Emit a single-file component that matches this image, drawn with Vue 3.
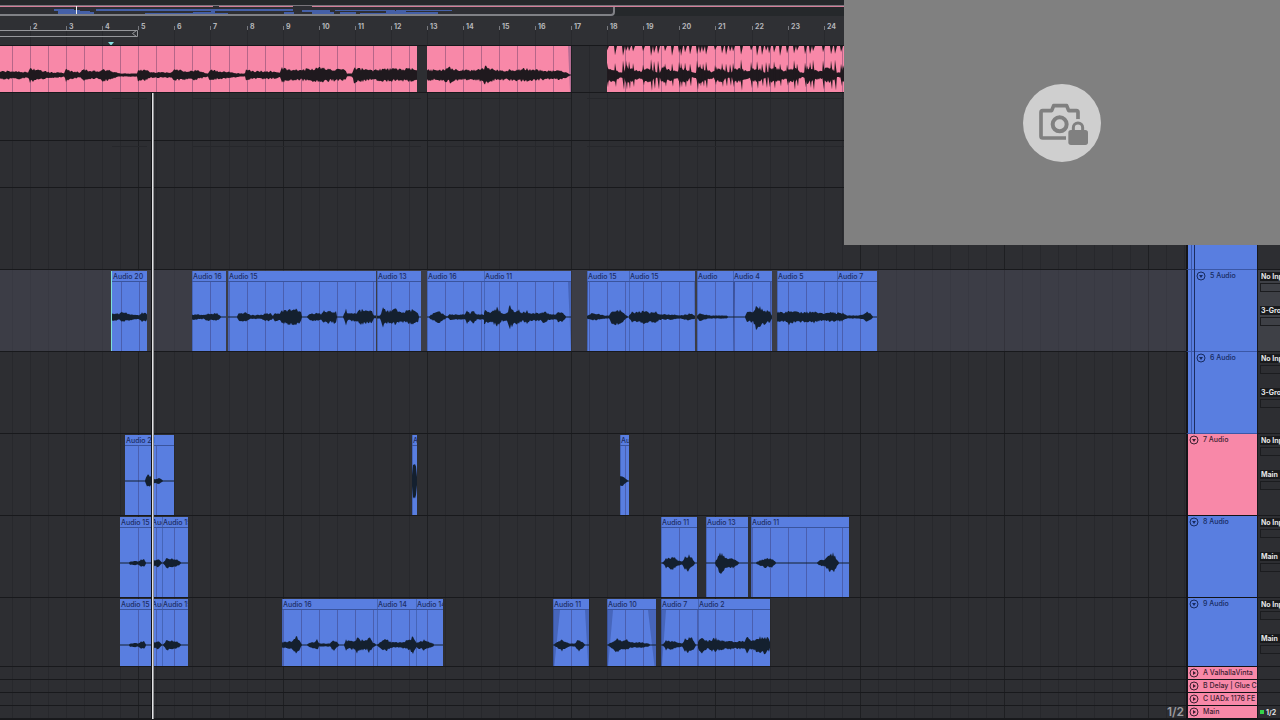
<script setup>
const BAR = 36.07
const ORIGIN = -42

const barX = (n) => Math.round(ORIGIN + n * BAR)
const bars = Array.from({ length: 24 }, (_, i) => ({ n: i + 1, x: barX(i + 1) }))
const gridLines = Array.from({ length: 140 }, (_, i) => ({
  x: Math.round(ORIGIN + BAR + (i * BAR) / 2),
  major: (i / 2) % 4 === 0,
}))

const noise = (n) => {
  const v = Math.sin(n * 12.9898 + 4.1) * 43758.5453
  return v - Math.floor(v)
}

function level(env, x) {
  if (x <= env[0]) return env[1]
  for (let i = 2; i < env.length; i += 2) {
    if (x <= env[i]) {
      const t = (x - env[i - 2]) / (env[i] - env[i - 2] || 1)
      return env[i - 1] + (env[i + 1] - env[i - 1]) * t
    }
  }
  return env[env.length - 1]
}

function wavePath(clip, mid) {
  const top = []
  const bottom = []
  for (let x = clip.x; x <= clip.x + clip.w; x += 1) {
    const a = level(clip.env, x)
    const up = a < 0.6 ? 0.5 : a * (0.75 + noise(x) * 0.6) + 0.4
    const down = a < 0.6 ? 0.5 : a * (0.75 + noise(x + 777) * 0.6) + 0.4
    top.push(`${x - clip.x} ${(mid - up).toFixed(1)}`)
    bottom.unshift(`${x - clip.x} ${(mid + down).toFixed(1)}`)
  }
  return `M${top.join('L')}L${bottom.join('L')}Z`
}

const drumHits = [
  607, 615, 623, 626, 629, 633, 643, 651, 654, 658, 665, 672, 679, 681, 685, 690, 697, 700, 703, 706,
  715, 722, 726, 730, 733, 741, 751, 757, 762, 766, 769, 774, 780, 787, 794, 797, 805, 810, 813, 823, 831, 835, 841,
]

function drumPeaks(clip) {
  return drumHits
    .map((h, i) => {
      const x = h - clip.x
      const s = 10 + noise(i) * 6
      const t = 4 + noise(i + 50) * 6
      return (
        `M${x - 1} 29L${x} ${(29 - s).toFixed(1)}L${x + 2} 29L${x + 1} ${(29 + s).toFixed(1)}Z` +
        `M${x - 1} 0L${x} ${t.toFixed(1)}L${x + 1} ${(t / 2).toFixed(1)}L${x + 2} 0Z`
      )
    })
    .join('')
}

const linesIn = (clip) => gridLines.filter((g) => g.x > clip.x && g.x < clip.x + clip.w).map((g) => g.x - clip.x)

const c = (name, x, end, env, extra = {}) => ({ name, x, w: end - x, env, ...extra })

const drumEnv = [607, 6]
for (let n = 18; n < 25; n++) {
  const x = barX(n)
  drumEnv.push(x + 1, 6, x + 8, 5, x + 13, 2, x + 17, 2, x + 19, 7, x + 26, 5, x + 32, 3, x + 35, 3)
}

const vocalDouble = () => [
  c('Audio 15', 120, 151, [120, 0, 128, 0, 130, 1, 136, 1.5, 138, 1, 141, 3, 144, 3, 146, 0, 151, 0]),
  c('Audio 15', 151, 162, [151, 5, 153, 5, 154, 2, 157, 3, 160, 2, 162, 0]),
  c('Audio 15', 162, 188, [162, 0, 164, 1, 166, 4, 169, 4, 173, 3, 177, 3, 180, 1, 182, 0, 188, 0]),
]

const tracks = [
  {
    id: 't1', size: 'mix', clips: [
      c('', -2, 417, [0, 3, 20, 3, 28, 2, 30, 6, 38, 4, 45, 3, 50, 2, 60, 2, 64, 1, 66, 5, 72, 3, 80, 2, 84, 5, 90, 3, 100, 3, 103, 5, 112, 3, 120, 1, 137, 1, 138, 5, 146, 4, 151, 2, 164, 2, 172, 2, 174, 5, 182, 4, 190, 3, 194, 4, 200, 3, 208, 1, 210, 5, 218, 3, 225, 3, 232, 2, 240, 1, 245, 1, 246, 4, 256, 3, 262, 3, 270, 3, 280, 2, 282, 6, 290, 4, 300, 4, 306, 5, 320, 6, 330, 5, 345, 4, 347, 1, 352, 1, 354, 6, 364, 5, 372, 4, 380, 5, 390, 5, 405, 5, 417, 5]),
      c('', 427, 571, [427, 4, 440, 4, 450, 6, 460, 4, 470, 4, 480, 5, 486, 7, 495, 4, 510, 4, 525, 5, 540, 4, 550, 3, 560, 4, 566, 2, 571, 0], { fadeOut: 3 }),
      c('', 607, 900, drumEnv, { drums: true }),
    ],
  },
  { id: 't2', size: 'mid', clips: [], ghosts: true },
  { id: 't3', size: 'mix', clips: [], ghosts: true },
  { id: 't4', size: 'tall', clips: [], label: '4 Audio', tone: 'blue', grouped: true, route: '3-Group' },
  {
    id: 't5', size: 'tall', label: '5 Audio', tone: 'blue', grouped: true, route: '3-Group', selected: true, clips: [
      c('Audio 20', 111, 147, [112, 3, 118, 2.5, 121, 4, 126, 3, 134, 1.5, 138, 1.5, 141, 4, 145, 3, 147, 1], { cue: true }),
      c('Audio 16', 192, 226, [193, 2, 203, 1.5, 208, 3, 212, 2.5, 217, 3, 220, 1, 221, 0, 226, 0]),
      c('Audio 15', 228, 376, [228, 0, 237, 0, 239, 3, 245, 3.5, 250, 1.5, 262, 1.5, 265, 3, 270, 3, 273, 1, 275, 3, 280, 3, 282, 5, 290, 6, 297, 6, 301, 4, 302, 0, 307, 0, 310, 3, 318, 3, 321, 2, 324, 5, 336, 5, 337, 0, 343, 0, 346, 6, 348, 3, 356, 3, 360, 6, 372, 5, 374, 1, 376, 1]),
      c('Audio 13', 377, 421, [377, 1, 380, 1, 383, 8, 386, 5, 392, 5, 395, 7, 400, 4, 408, 5, 415, 6, 418, 4, 419, 0, 421, 0]),
      c('Audio 16', 427, 484, [428, 0, 432, 2, 438, 5, 444, 2, 447, 0, 450, 2, 465, 2, 467, 5, 470, 3, 473, 6, 477, 2, 485, 2]),
      c('Audio 11', 484, 571, [485, 5, 492, 4, 497, 8, 502, 3, 507, 4, 510, 9, 515, 5, 519, 6, 522, 3, 527, 5, 530, 3, 540, 3, 545, 5, 549, 2, 556, 2, 558, 4, 563, 4, 566, 0, 571, 0], { fadeOut: 3 }),
      c('Audio 15', 587, 629, [587, 1, 592, 3, 600, 2, 605, 1, 609, 1, 612, 6, 620, 6, 626, 1, 629, 0], { fadeIn: 1 }),
      c('Audio 15', 629, 695, [629, 1, 632, 4, 640, 4, 645, 6, 650, 3, 654, 5, 660, 2, 670, 2, 680, 1, 686, 2, 690, 3, 695, 1], { fadeOut: 1 }),
      c('Audio', 697, 733, [697, 1, 700, 3, 710, 1, 726, 1, 730, 0, 734, 0]),
      c('Audio 4', 733, 772, [734, 0, 745, 0, 747, 4, 753, 4, 756, 11, 760, 8, 764, 6, 770, 4, 772, 1], { fadeIn: 2, fadeOut: 2 }),
      c('Audio 5', 777, 837, [777, 4, 785, 3, 789, 6, 796, 4, 808, 4, 815, 5, 820, 3, 828, 3, 832, 4, 837, 3]),
      c('Audio 7', 837, 877, [837, 4, 843, 3, 847, 1, 858, 1, 863, 2, 867, 4, 870, 3, 873, 0, 877, 0]),
    ],
  },
  { id: 't6', size: 'tall', label: '6 Audio', tone: 'blue', grouped: true, route: '3-Group', clips: [] },
  {
    id: 't7', size: 'tall', label: '7 Audio', tone: 'pink', route: 'Main', clips: [
      c('Audio 21', 125, 174, [125, 0, 145, 0, 146, 3, 148, 5, 152, 4, 154, 1.5, 160, 2, 163, 0, 174, 0]),
      c('Audio 1', 412, 417, [412, 4, 413, 14, 415, 18, 416, 16, 417, 4]),
      c('Audio 1', 620, 629, [620, 4, 622, 4, 625, 2, 628, 0, 629, 0]),
    ],
  },
  {
    id: 't8', size: 'tall', label: '8 Audio', tone: 'blue', route: 'Main', clips: [
      ...vocalDouble(),
      c('Audio 11', 661, 697, [661, 0, 664, 1, 666, 4, 673, 5, 678, 2, 682, 1, 685, 5, 689, 7, 692, 4, 695, 0, 697, 0]),
      c('Audio 13', 706, 748, [706, 0, 715, 0, 717, 4, 720, 9, 724, 6, 728, 3, 734, 4, 738, 1, 740, 0, 748, 0]),
      c('Audio 11', 751, 849, [751, 0, 755, 0, 760, 2, 766, 4, 769, 3, 772, 4, 776, 0, 816, 0, 820, 2, 825, 3, 829, 6, 833, 8, 837, 3, 839, 0, 849, 0]),
    ],
  },
  {
    id: 't9', size: 'short', label: '9 Audio', tone: 'blue', route: 'Main', clips: [
      ...vocalDouble(),
      c('Audio 16', 282, 377, [282, 2, 292, 3, 297, 7, 300, 3, 302, 0, 307, 0, 310, 2, 316, 3, 317, 5, 319, 1, 330, 1, 333, 5, 337, 2, 339, 0, 344, 0, 346, 4, 355, 3, 357, 7, 360, 4, 367, 4, 369, 7, 373, 2, 377, 0]),
      c('Audio 14', 377, 416, [377, 0, 381, 3, 386, 5, 391, 2, 400, 2, 405, 3, 410, 4, 413, 7, 416, 3]),
      c('Audio 14', 416, 443, [416, 2, 420, 3, 424, 4, 429, 2, 433, 1, 434, 0, 443, 0]),
      c('Audio 11', 553, 589, [553, 0, 557, 2, 562, 5, 566, 2, 570, 1, 575, 1, 579, 5, 583, 2, 585, 0, 589, 0], { fadeIn: 7, fadeOut: 4 }),
      c('Audio 10', 607, 656, [607, 0, 611, 2, 617, 6, 622, 3, 627, 4, 631, 2, 642, 2, 648, 1, 652, 0, 656, 0], { fadeIn: 6, fadeOut: 8 }),
      c('Audio 7', 661, 698, [661, 0, 664, 1, 666, 4, 673, 3, 677, 2, 682, 1, 685, 5, 691, 7, 694, 3, 696, 0, 698, 0], { fadeIn: 5 }),
      c('Audio 2', 698, 770, [698, 3, 702, 7, 708, 3, 714, 6, 720, 4, 727, 3, 738, 3, 745, 3, 747, 7, 751, 3, 757, 6, 765, 7, 769, 5, 770, 2]),
    ],
  },
]

const ghostSpans = [[112, 147], [193, 421], [428, 571], [587, 845]]

const returns = [
  { id: 'ra', label: 'A ValhallaVinta' },
  { id: 'rb', label: 'B Delay | Glue C' },
  { id: 'rc', label: 'C UADx 1176 FE' },
]

const overviewPink = [[0, 213], [219, 293], [312, 900]]
const overviewBlue = [
  [54, 20, 9, 2], [58, 22, 10, 4], [59, 35, 12, 3], [80, 10, 11, 2], [96, 197, 9, 2], [145, 83, 13, 1], [193, 22, 12, 2],
  [211, 4, 10, 3], [284, 10, 12, 2], [302, 28, 10, 2], [312, 22, 12, 2], [335, 60, 10, 1],
  [340, 16, 12, 2], [360, 40, 13, 1], [386, 20, 11, 3], [396, 56, 10, 1], [405, 33, 12, 2],
]
</script>

<template>
  <main class="daw">
    <header class="top">
      <svg class="overview" aria-hidden="true">
        <rect class="ov-tint" x="0" y="6" width="613" height="9" />
        <path class="ov-frame" d="M0 5.5H900" />
        <rect v-for="s in overviewPink" :key="s[0]" class="ov-pink" :x="s[0]" y="6" :width="s[1] - s[0]" height="1" />
        <rect v-for="(b, i) in overviewBlue" :key="i" class="ov-blue" :x="b[0]" :y="b[2]" :width="b[1]" :height="b[3]" />
        <path class="ov-view" d="M0 15H611Q614 15 614 12V7" />
        <rect class="ov-head" x="76" y="6" width="1" height="8" />
      </svg>

      <div class="ruler">
        <svg class="ruler-art" aria-hidden="true">
          <path v-for="b in bars" :key="b.n" class="tick" :d="`M${b.x + 0.5} 10V14`" />
          <path v-for="b in bars" :key="'g' + b.n" class="tick-dim" :d="`M${b.x + 0.5} 14V29`" />
          <path class="loop" d="M0 14.5H137.5V20.5H0M136.5 14.5L132.5 17.5L136.5 20.5" />
          <path class="insert" d="M108 26H114L111 29.5Z" />
        </svg>
        <span v-for="b in bars.slice(1)" :key="b.n" class="bar-no" :style="{ left: b.x + 3 + 'px' }">{{ b.n }}</span>
      </div>
    </header>

    <section class="arrangement" aria-label="Arrangement">
      <svg class="grid" aria-hidden="true">
        <rect v-for="(g, i) in gridLines" :key="i" :class="{ major: g.major }" :x="g.x" y="0" width="1" height="100%" />
      </svg>

      <div v-for="t in tracks" :key="t.id" class="row" :class="[t.size, { selected: t.selected }]">
        <div class="lane">
          <template v-if="t.ghosts">
            <i v-for="s in ghostSpans" :key="s[0]" class="ghost" :style="{ left: s[0] + 'px', width: s[1] - s[0] + 'px' }"></i>
          </template>
          <article
            v-for="(clip, i) in t.clips"
            :key="i"
            class="clip"
            :class="{ audio: clip.name, cue: clip.cue }"
            :style="{ left: clip.x + 'px', width: clip.w + 'px' }"
          >
            <h3 v-if="clip.name" class="clip-name">{{ clip.name }}</h3>
            <svg class="wave" aria-hidden="true">
              <rect v-for="x in linesIn(clip)" :key="x" class="clip-line" :x="x" y="0" width="1" height="100%" />
              <path v-if="clip.fadeIn" class="fade" :d="`M0 0H${clip.fadeIn}L0 69Z`" />
              <path v-if="clip.fadeOut" class="fade" :d="`M${clip.w} 0H${clip.w - clip.fadeOut}L${clip.w} 69Z`" />
              <path :d="wavePath(clip, clip.name ? 35 : 29)" />
              <path v-if="clip.drums" :d="drumPeaks(clip)" />
            </svg>
          </article>
        </div>
        <div class="head" :class="[t.tone, { grouped: t.grouped }]">
          <div v-if="t.label" class="head-inner">
            <button class="fold" :aria-label="'Fold ' + t.label">
              <svg viewBox="0 0 10 10"><circle cx="5" cy="5" r="4" /><path d="M3 4H7L5 7Z" /></svg>
            </button>
            <span>{{ t.label }}</span>
          </div>
        </div>
        <div class="io">
          <template v-if="t.route">
            <select class="pick" :aria-label="t.label + ' input'"><option>No Input</option></select>
            <select class="slot" :aria-label="t.label + ' input channel'"><option></option></select>
            <select class="pick second" :aria-label="t.label + ' output'"><option>{{ t.route }}</option></select>
            <select class="slot" :aria-label="t.label + ' output channel'"><option></option></select>
          </template>
        </div>
      </div>

      <div v-for="r in returns" :key="r.id" class="row bus">
        <div class="lane"></div>
        <div class="head pink">
          <div class="head-inner">
            <button class="fold" :aria-label="'Unfold ' + r.label">
              <svg viewBox="0 0 10 10"><circle cx="5" cy="5" r="4" /><path d="M4 3V7L7 5Z" /></svg>
            </button>
            <span>{{ r.label }}</span>
          </div>
        </div>
        <div class="io"></div>
      </div>

      <div class="row bus">
        <div class="lane"><span class="zoom-grid">1/2</span></div>
        <div class="head pink">
          <div class="head-inner">
            <button class="fold" aria-label="Unfold Main">
              <svg viewBox="0 0 10 10"><circle cx="5" cy="5" r="4" /><path d="M4 3V7L7 5Z" /></svg>
            </button>
            <span>Main</span>
          </div>
        </div>
        <div class="io main-io"><i class="led"></i><span>1/2</span></div>
      </div>

      <div class="playhead"></div>
    </section>

    <aside class="camera" aria-label="Camera locked">
      <svg class="camera-badge" viewBox="0 0 234 234" role="img" aria-label="Camera locked">
        <circle class="disc" cx="117" cy="117" r="117" />
        <path class="body" d="M165 106V85Q165 80 160 80H137L131 65H92L86 80H59Q54 80 54 85V157Q54 162 59 162H129" />
        <circle class="lens" cx="110" cy="121" r="21" />
        <path class="halo" d="M151 140V131A14 14 0 0 1 179 131V140M143 145H188V176H143Z" />
        <path class="shackle" d="M151 140V131A14 14 0 0 1 179 131V140" />
        <rect class="lock" x="136" y="138" width="59" height="45" rx="8" />
      </svg>
    </aside>
  </main>
</template>

<style>
body {
  background: #2c2d31;
}
</style>

<style scoped>
.daw {
  position: relative;
  min-height: 100vh;
  overflow: hidden;
  background: #2d2e32;
  color: #b4b5b9;
  font-family: Inter, "Liberation Sans", sans-serif;
  font-size: 7px;
  line-height: 9px;
}
.overview {
  display: block;
  width: 100%;
  height: 16px;
  background: #25282b;
}
.ov-tint { fill: #2e2f34; }
.ov-frame { stroke: #77747a; fill: none; }
.ov-pink { fill: #d27d98; }
.ov-blue { fill: #4560a8; }
.ov-view { stroke: #808186; stroke-width: 2; fill: none; }
.ov-head { fill: #f0f0f0; }
.ruler {
  position: relative;
  height: 29px;
  border-bottom: 1px solid #17181b;
  background: #2f3034;
}
.ruler-art {
  display: block;
  width: 100%;
  height: 29px;
}
.tick { stroke: #77787d; }
.tick-dim { stroke: #28292d; }
.loop { stroke: #96979b; fill: none; }
.insert { fill: #86dfe0; }
.bar-no {
  position: absolute;
  top: 6px;
  font-weight: 700;
}
.arrangement {
  position: relative;
  border-bottom: 1px solid #17181b;
}
.grid {
  position: absolute;
  top: 0;
  left: 0;
  width: calc(100% - 94px);
  height: 100%;
}
.grid rect { fill: #27282c; }
.grid rect.major { fill: #1e1f22; }
.row {
  display: grid;
  grid-template-columns: minmax(0, 1fr) 71px 23px;
}
.mix { height: 47px; }
.mid { height: 48px; }
.tall { height: 82px; }
.short { height: 69px; }
.bus { height: 13px; }
.lane {
  position: relative;
  border-bottom: 1px solid #18191c;
}
.selected .lane { background: rgba(88, 90, 106, 0.36); }
.selected .io { background: #3e4046; }
.ghost {
  position: absolute;
  top: 5px;
  height: 1px;
  background: #26272b;
}
.clip {
  position: absolute;
  top: 0;
  bottom: 0;
  overflow: hidden;
  background: #f888a8;
  color: #1f191e;
}
.clip.audio {
  top: 1px;
  background: #597ee0;
  color: #14202f;
}
.clip.audio + .clip.audio { box-shadow: inset 1px 0 #4665b8; }
.clip.cue { border-left: 1px solid #7fe0d8; box-sizing: border-box; }
.clip-name {
  height: 10px;
  margin: 0;
  padding-left: 1px;
  border-bottom: 1px solid #3a549d;
  overflow: hidden;
  color: #1c2d63;
  font-size: 7px;
  font-weight: 500;
  line-height: 11px;
  white-space: nowrap;
}
.wave {
  display: block;
  width: 100%;
  height: 69px;
  margin-top: -1px;
  fill: currentColor;
}
.clip:not(.audio) .wave { margin-top: 0; }
.clip-name + .wave { border-top: 1px solid #3a549d; margin-top: -1px; box-sizing: border-box; height: 70px; }
.clip-line { fill: #2a2048; opacity: 0.32; }
.fade { fill: #1d2f68; opacity: 0.3; }
.head {
  border-bottom: 1px solid #121316;
  border-left: 2px solid #141518;
  color: #3b2030;
}
.head.blue { background: #597ee0; color: #172b60; }
.head.pink { background: #f888a8; }
.head.grouped {
  padding-left: 2px;
  border-bottom-color: #3b57a6;
}
.grouped .head-inner {
  height: 100%;
  margin-left: 4px;
  border-left: 1px solid #1c2c5e;
  border-bottom: 1px solid #16244d;
  padding-left: 1px;
}
.head.grouped { box-shadow: inset 3px 0 #597ee0, inset 4px 0 #3b57a6; }
.head-inner {
  display: flex;
  align-items: flex-start;
  gap: 4px;
  padding: 1px 0 0 1px;
  font-weight: 500;
  line-height: 10px;
  overflow: hidden;
  white-space: nowrap;
}
.tall .head-inner { padding-top: 1px; }
.short .head-inner { padding-top: 1px; }
.fold {
  flex: none;
  width: 10px;
  height: 10px;
  padding: 0;
  border: 0;
  background: none;
  color: inherit;
}
.fold svg { display: block; width: 10px; height: 10px; }
.fold circle { fill: none; stroke: currentColor; }
.fold path { fill: currentColor; }
.io {
  display: flex;
  flex-direction: column;
  padding: 2px 0 0 2px;
  border-left: 1px solid #18191c;
  border-bottom: 1px solid #18191c;
  overflow: hidden;
}
.pick,
.slot {
  flex: none;
  appearance: none;
  box-sizing: border-box;
  width: 48px;
  height: 9px;
  margin: 0;
  padding: 0 1px;
  border: 0;
  border-radius: 0;
  background: #191a1c;
  color: #e4e5e7;
  font: 700 7px/9px Inter, "Liberation Sans", sans-serif;
}
.slot {
  margin-top: 2px;
  border: 1px solid #1b1c1f;
  background: transparent;
}
.second { margin-top: 14px; }
.zoom-grid {
  position: absolute;
  right: 2px;
  bottom: 0;
  color: #9a9b9f;
  font-size: 12px;
  font-weight: 600;
  line-height: 12px;
}
.main-io {
  flex-direction: row;
  align-items: center;
  gap: 2px;
  padding-top: 0;
  color: #e4e5e7;
  font-weight: 700;
}
.led {
  width: 4px;
  height: 4px;
  background: #35d34a;
}
.playhead {
  position: absolute;
  top: 47px;
  bottom: 0;
  left: 151px;
  width: 2px;
  border-left: 1px solid #101114;
  background: linear-gradient(90deg, #e2e2e4 50%, #8e8f92 50%);
}
.camera {
  position: absolute;
  top: 0;
  right: 0;
  display: grid;
  place-items: center;
  width: 436px;
  height: 245px;
  background: #808080;
}
.camera-badge { width: 78px; height: 78px; }
.disc { fill: #cfcfcf; }
.body { fill: none; stroke: #808080; stroke-width: 11; stroke-linejoin: round; }
.lens { fill: none; stroke: #808080; stroke-width: 12; }
.halo { fill: #cfcfcf; stroke: #cfcfcf; stroke-width: 24; stroke-linejoin: round; }
.shackle { fill: none; stroke: #808080; stroke-width: 9; }
.lock { fill: #808080; }
</style>
